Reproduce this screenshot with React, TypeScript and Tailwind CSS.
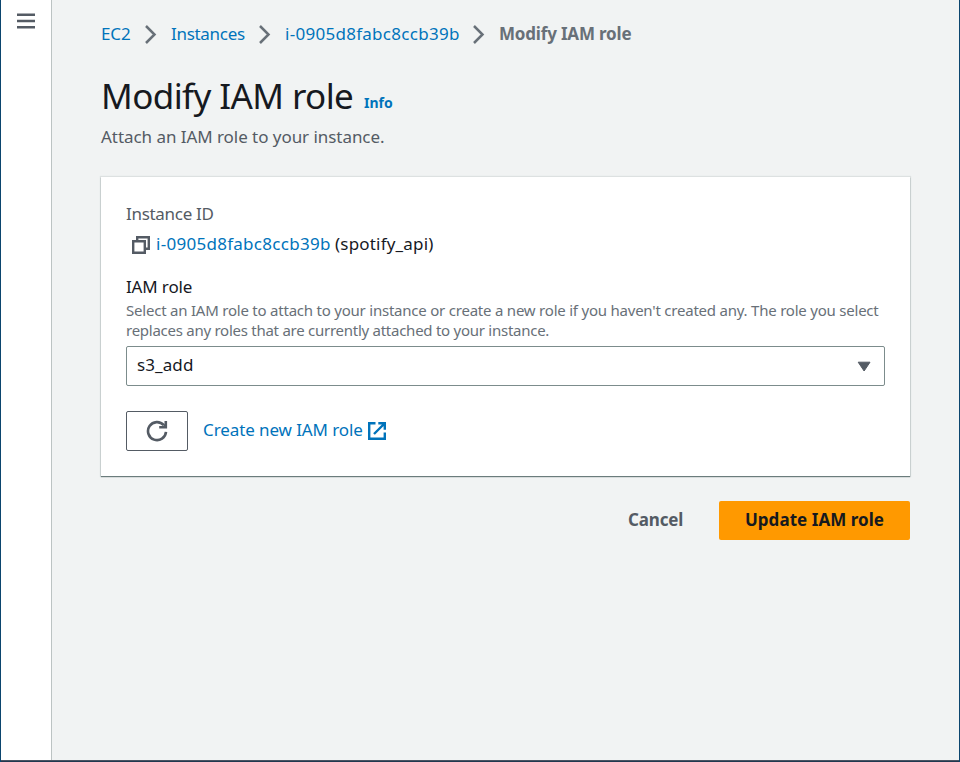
import React from "react";

function Chevron() {
  return (
    <svg className="h-[20px] w-[14px] shrink-0" viewBox="0 0 14 20" fill="none" stroke="#687078" strokeWidth="2.5">
      <path d="M2 2L10.5 10.5L2 19" />
    </svg>
  );
}

export default function App() {
  return (
    <div className="flex h-[762px] w-[960px] flex-col overflow-hidden border-x border-[#0b456e] bg-[#f1f3f3] font-['Noto_Sans','Open_Sans',sans-serif] text-[17px] text-[#16191f]">
      <div className="flex min-h-0 flex-1">
        <nav className="w-[51px] shrink-0 border-r border-[#bcc3c3] bg-white pl-4 pt-[13px]">
          <svg className="h-4 w-[18px]" viewBox="0 0 18 16" stroke="#545b64" strokeWidth="2.5">
            <path d="M0 1.7H18M0 8H18M0 14.3H18" />
          </svg>
        </nav>
        <main className="flex flex-col pl-[49px] pt-[21px]">
          <div className="flex h-[26px] items-center whitespace-nowrap text-[#0073bb]">
            <a className="w-[43px] tracking-[-0.1px]">EC2</a>
            <Chevron />
            <a className="ml-[13px] w-[87px] tracking-[-0.3px]">Instances</a>
            <Chevron />
            <a className="ml-[13px] w-[187px] tracking-[0.28px]">i-0905d8fabc8ccb39b</a>
            <Chevron />
            <span className="ml-[13px] font-bold tracking-[-0.18px] text-[#687078]">Modify IAM role</span>
          </div>
          <div className="mt-[25px] flex h-[48px] items-baseline whitespace-nowrap">
            <h1 className="w-[263px] text-[35px] leading-[48px] tracking-[-0.6px]">Modify IAM role</h1>
            <a className="relative -top-px text-[14px] font-bold text-[#0073bb]">Info</a>
          </div>
          <p className="mt-[4px] h-[26px] whitespace-nowrap leading-[26px] tracking-[-0.05px] text-[#545b64]">Attach an IAM role to your instance.</p>
          <section className="mt-[27px] flex h-[299px] w-[809px] flex-col bg-white px-[25px] pt-[24px] shadow-[0_1px_1px_0_#6b7c7c,0_0_1px_1px_#dde1e1]">
            <div className="h-[26px] leading-[26px] tracking-[-0.3px] text-[#545b64]">Instance ID</div>
            <div className="mt-[4px] flex h-[26px] items-center whitespace-nowrap">
              <svg className="ml-[6px] mr-[6px] mt-[2px] h-[18px] w-[18px] shrink-0" viewBox="0 0 18 18" fill="none" stroke="#545b64" strokeWidth="2.4">
                <path d="M1.2 5.2H12.8V16.8H1.2ZM5.2 5V1.2H16.8V12.8H13" />
              </svg>
              <a className="w-[179px] tracking-[0.28px] text-[#0073bb]">i-0905d8fabc8ccb39b</a>
              <span className="tracking-[0.2px]">(spotify_api)</span>
            </div>
            <label className="mt-[17px] h-[26px] leading-[26px] tracking-[-0.15px]">IAM role</label>
            <p className="h-[40px] whitespace-nowrap text-[15px] leading-[20px] text-[#687078]">
              <span className="block tracking-[-0.22px]">Select an IAM role to attach to your instance or create a new role if you haven't created any. The role you select</span>
              <span className="block tracking-[-0.26px]">replaces any roles that are currently attached to your instance.</span>
            </p>
            <div className="mt-[6px] flex h-[40px] w-[759px] shrink-0 items-center justify-between rounded-[2px] border border-[#7c8c8c] pl-[10px] pr-[13px]">
              <span className="pb-[3px] tracking-[0.1px]">s3_add</span>
              <svg className="h-[11px] w-[14px]" viewBox="0 0 14 11" fill="#545b64" stroke="#545b64" strokeLinejoin="round">
                <path d="M1.2 1.2H13L7.1 10Z" />
              </svg>
            </div>
            <div className="mt-[25px] flex h-[40px] items-center">
              <button className="flex h-[40px] w-[62px] items-center justify-center rounded-[2px] border border-[#545b64]">
                <svg className="h-[22px] w-[22px]" viewBox="0 0 22 22" fill="none" stroke="#545b64" strokeWidth="2.6">
                  <path d="M20 11.8A9 9 0 1 1 17.8 5.2M19.8 1V7.3H13.2" />
                  <path d="M15.5 7.5L20 3V7.5Z" fill="#545b64" stroke="none" />
                </svg>
              </button>
              <a className="ml-[15px] w-[165px] whitespace-nowrap pb-[2px] tracking-[-0.1px] text-[#0073bb]">Create new IAM role</a>
              <svg className="h-[18px] w-[18px]" viewBox="0 0 18 18" fill="none" stroke="#0073bb" strokeWidth="2.4">
                <path d="M7.5 1.2H1.2V16.8H16.8V10.5M10.3 1.2H16.8V7.7M16.5 1.5L6 12" />
              </svg>
            </div>
          </section>
          <div className="mt-[25px] flex h-[39px] w-[809px] items-center justify-end font-bold">
            <button className="mr-[36px] w-[55px] whitespace-nowrap pb-[2px] text-left tracking-[-0.15px] text-[#545b64]">Cancel</button>
            <button className="h-[39px] w-[191px] whitespace-nowrap rounded-[2px] bg-[#ff9900] pb-[2px] tracking-[0.05px]">Update IAM role</button>
          </div>
        </main>
      </div>
      <div className="h-[2px] shrink-0 border-t border-[#4a5362] bg-[#20384f]" />
    </div>
  );
}
